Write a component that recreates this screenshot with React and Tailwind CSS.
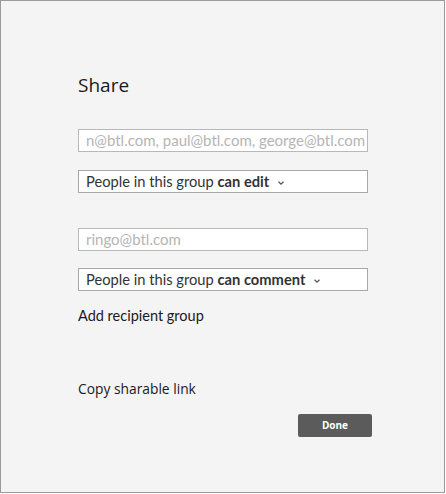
import React from "react";

function Chevron() {
  return (
    <svg width="8" height="6" viewBox="0 0 8 6" className="ml-[8px] mt-[2px]">
      <path d="M1.5 1.8 L4 4.2 L6.5 1.8" fill="none" stroke="#555" strokeWidth="1.3" />
    </svg>
  );
}

function Field({ text }) {
  return (
    <div className="w-[290px] h-[23px] border border-[#b8b8b8] bg-white flex items-center px-[7px] overflow-hidden whitespace-nowrap text-[15px] text-[#b5b5b5] font-['Lato',sans-serif]">
      {text}
    </div>
  );
}

function Select({ bold }) {
  return (
    <div className="w-[290px] h-[23px] border border-[#a8a8a8] bg-white flex items-center px-[7px] whitespace-nowrap text-[14.7px] text-[#333] font-['Lato',sans-serif]">
      <span>People in this group&nbsp;</span>
      <span className="font-bold">{bold}</span>
      <Chevron />
    </div>
  );
}

export default function App() {
  return (
    <div className="w-[446px] h-[494px] bg-white">
      <div className="w-[445px] h-[493px] border border-[#9a9a9a] bg-[#f4f4f4] flex flex-col pl-[77px] pt-[71px]">
        <div className="text-[19px] leading-[26px] text-[#1a1a1a] font-['Open_Sans',sans-serif]">Share</div>
        <div className="mt-[31px]">
          <Field text="n@btl.com, paul@btl.com, george@btl.com" />
        </div>
        <div className="mt-[18px]">
          <Select bold="can edit" />
        </div>
        <div className="mt-[35px]">
          <Field text="ringo@btl.com" />
        </div>
        <div className="mt-[17px]">
          <Select bold="can comment" />
        </div>
        <div className="mt-[15px] text-[14.5px] leading-[20px] text-[#1a1a1a] font-['Lato',sans-serif]">Add recipient group</div>
        <div className="mt-[53px] text-[13.8px] leading-[20px] text-[#1a1a1a] font-['Open_Sans',sans-serif]">Copy sharable link</div>
        <div className="mt-[15px] w-[294px] flex justify-end">
          <button className="w-[74px] h-[23px] bg-[#5b5b5b] rounded-[2px] text-white text-[10px] font-bold font-['Open_Sans',sans-serif]">Done</button>
        </div>
      </div>
    </div>
  );
}
